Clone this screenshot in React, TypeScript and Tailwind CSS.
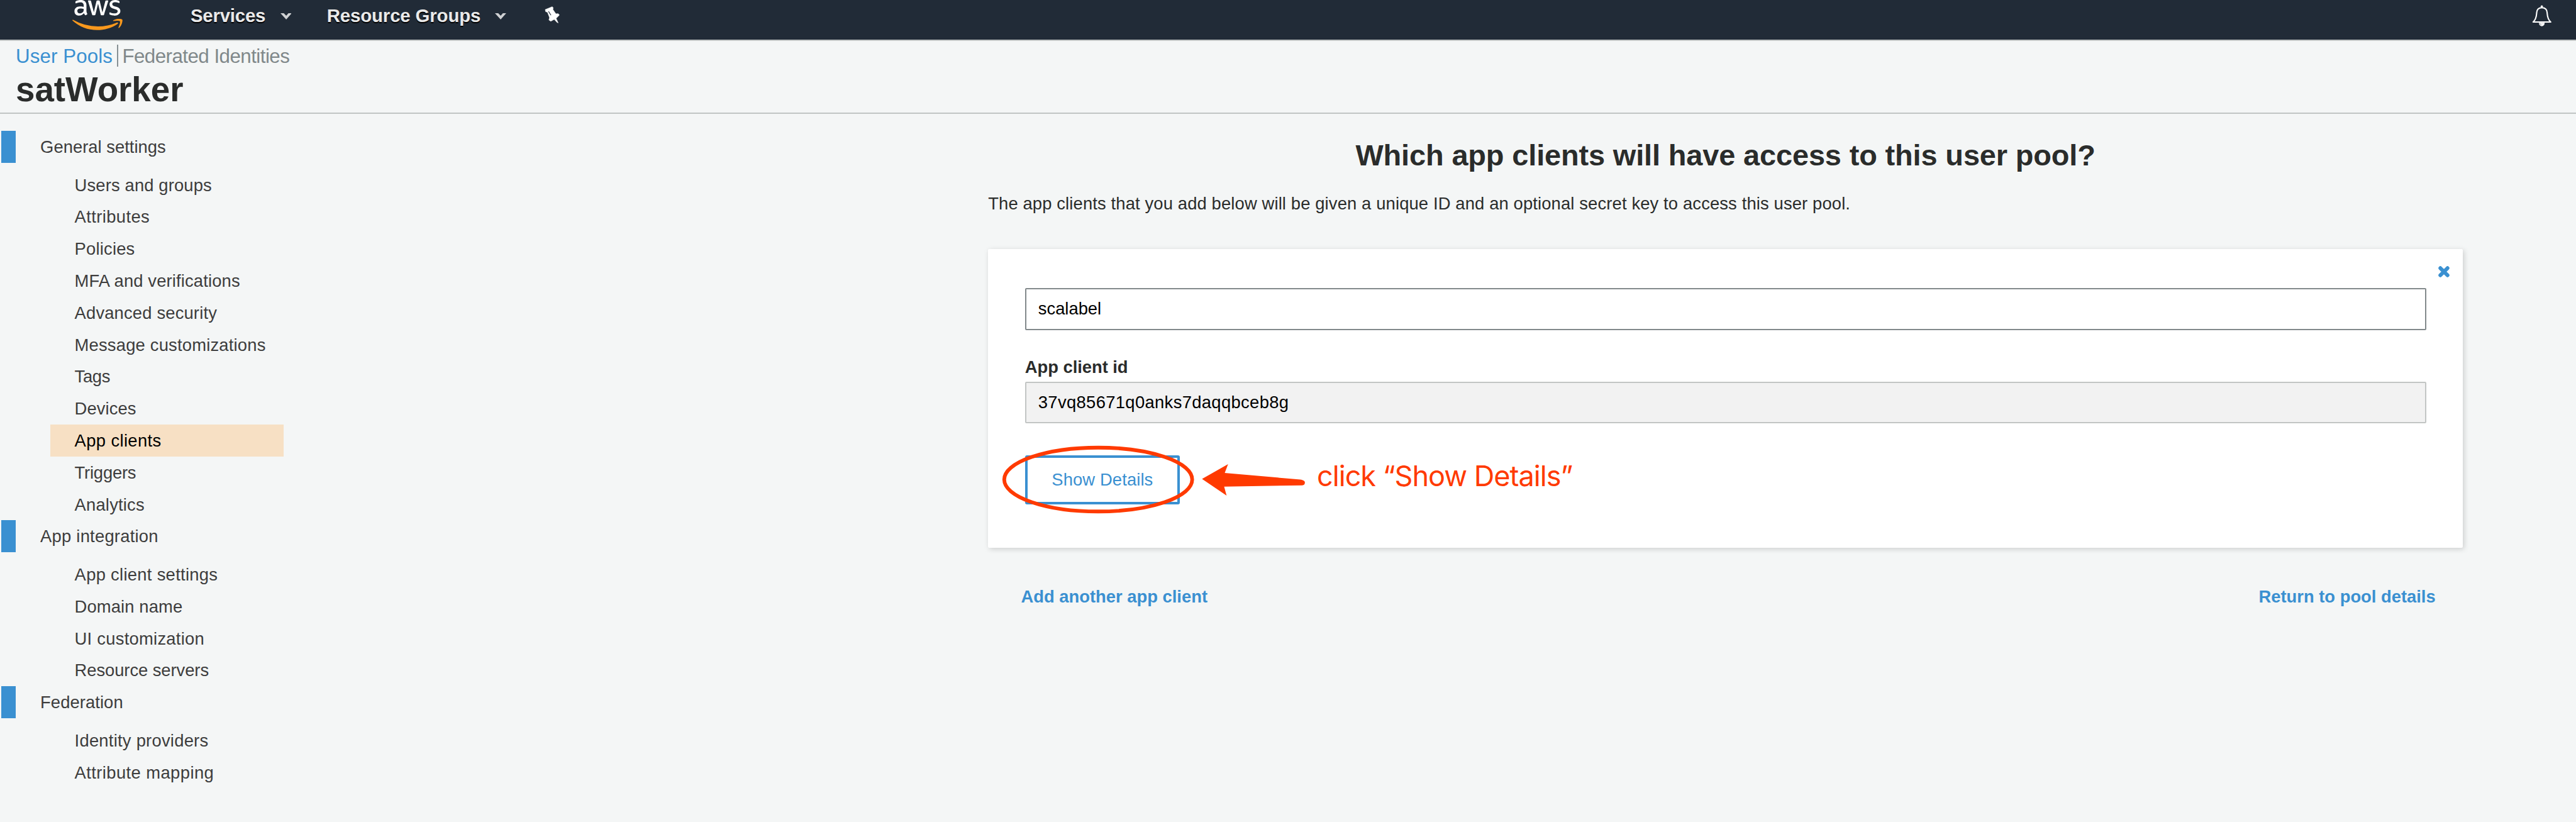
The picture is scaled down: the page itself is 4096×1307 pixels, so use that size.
import { FaAws } from 'react-icons/fa';

type Item = { label: string; tracking: string; active?: boolean };
type Section = { title: string; tracking: string; items: Item[] };

const sections: Section[] = [
  {
    title: 'General settings',
    tracking: 'tracking-[0.03px]',
    items: [
      { label: 'Users and groups', tracking: 'tracking-[0.15px]' },
      { label: 'Attributes', tracking: 'tracking-[0.4px]' },
      { label: 'Policies', tracking: 'tracking-[0.2px]' },
      { label: 'MFA and verifications', tracking: 'tracking-[0.15px]' },
      { label: 'Advanced security', tracking: 'tracking-[0.17px]' },
      { label: 'Message customizations', tracking: 'tracking-[0.2px]' },
      { label: 'Tags', tracking: 'tracking-[-0.3px]' },
      { label: 'Devices', tracking: 'tracking-[0.1px]' },
      { label: 'App clients', tracking: 'tracking-[0.38px]', active: true },
      { label: 'Triggers', tracking: 'tracking-[-0.2px]' },
      { label: 'Analytics', tracking: 'tracking-[0.2px]' },
    ],
  },
  {
    title: 'App integration',
    tracking: 'tracking-[0.24px]',
    items: [
      { label: 'App client settings', tracking: 'tracking-[0.3px]' },
      { label: 'Domain name', tracking: 'tracking-[0.13px]' },
      { label: 'UI customization', tracking: 'tracking-[0.26px]' },
      { label: 'Resource servers', tracking: 'tracking-[-0.06px]' },
    ],
  },
  {
    title: 'Federation',
    tracking: 'tracking-[0.08px]',
    items: [
      { label: 'Identity providers', tracking: 'tracking-[0.25px]' },
      { label: 'Attribute mapping', tracking: 'tracking-[0.42px]' },
    ],
  },
];

function Caret({ className }: { className: string }) {
  return (
    <svg viewBox="0 0 55 31" className={`h-[10.1px] w-[17.9px] ${className}`} fill="#cfd1d3">
      <path d="M0 0h16l12 12L39 0h16L28 31z" />
    </svg>
  );
}

function TopNav() {
  return (
    <nav className="flex h-[65px] items-start overflow-hidden border-b-2 border-[#c1c5c4] bg-[#212b37]">
      {/* Two-tone fill: white lettering above, orange smile below */}
      <svg width="0" height="0" className="absolute">
        <defs>
          <linearGradient id="aws-fill" gradientUnits="userSpaceOnUse" x1="0" y1="0" x2="0" y2="512">
            <stop offset="0.55" stopColor="#ffffff" />
            <stop offset="0.55" stopColor="#f8981d" />
          </linearGradient>
        </defs>
      </svg>
      <FaAws className="mt-[-8.5px] ml-[115.3px] h-[63.8px] w-[79.7px] shrink-0" fill="url(#aws-fill)" />
      <div className="ml-[107.9px] flex h-[49px] items-center text-[29.3px] leading-[49px] font-bold text-[#eaeaea] [text-shadow:0_2px_0_#000]">
        <span className="w-[119.3px] tracking-[-0.15px] whitespace-nowrap">Services</span>
        <Caret className="mt-[4px] ml-[23.4px]" />
        <span className="ml-[56.3px] w-[244.5px] tracking-[-0.09px] whitespace-nowrap">Resource Groups</span>
        <Caret className="mt-[4px] ml-[23.2px]" />
      </div>
      <svg viewBox="1100 31 74 82" className="mt-[10.3px] ml-[61px] h-[26.7px] w-[24.1px]">
        <path
          d="M1103 47 1137 33 1142 38 1140 46 1155 68 1166 67 1172 74 1156 90 1166 112 1161 110 1147 95 1130 104 1121 98 1124 86 1114 60 1105 57z"
          fill="#fff"
          stroke="#fff"
          strokeWidth="2"
          strokeLinejoin="round"
        />
        <path d="M1119 56l12 19" stroke="#212b37" strokeWidth="3.5" />
      </svg>
      <svg viewBox="386 23 97 105" className="mt-[7.5px] mr-[38.2px] ml-auto h-[34.2px] w-[31.6px]">
        <circle cx="434" cy="30" r="5.5" fill="#fff" />
        <path
          d="M391.5 106C408 92 408 74 409 60C410 44 420 36 434.5 36C449 36 459 44 460 60C461 74 461 92 477.5 106Z"
          fill="none"
          stroke="#fff"
          strokeWidth="6.5"
          strokeLinejoin="round"
        />
        <path d="M420 110h28c0 22-28 22-28 0z" fill="#fff" />
        <path d="M424 114l8 7" stroke="#212b37" strokeWidth="1.8" />
      </svg>
    </nav>
  );
}

function PoolHeader() {
  return (
    <header className="h-[116px] border-b-2 border-[#c1c5c4] pt-[6.3px] pl-[25px]">
      <div className="flex h-[35.2px] text-[31.27px] leading-[37px] whitespace-nowrap">
        <a className="w-[161px] tracking-[0.12px] text-[#3a90d1]">User Pools</a>
        <span className="h-[35.2px] w-[2px] bg-[#879094]" />
        <a className="pl-[6.4px] tracking-[-0.52px] text-[#80888a]">Federated Identities</a>
      </div>
      <h1 className="text-[54.7px] leading-[73.4px] font-bold text-[#2a2c2b]">satWorker</h1>
    </header>
  );
}

function Sidebar() {
  return (
    <aside className="w-[1571.2px] shrink-0 pt-[27.1px] text-[27.36px] leading-[51.4px] whitespace-nowrap text-[#3d3d3d]">
      {sections.map((s) => (
        <section key={s.title}>
          <div className="flex h-[50.81px] pl-[2px]">
            <span className="h-full w-[23.4px] bg-[#3a90d1]" />
            <span className={`pl-[38.7px] ${s.tracking}`}>{s.title}</span>
          </div>
          <ul className="pt-[9.77px]">
            {s.items.map((i) => (
              <li
                key={i.label}
                className={`ml-[80.2px] h-[50.81px] w-[371.3px] pl-[38.4px] ${i.tracking} ${
                  i.active ? 'bg-[#f7e0c4] text-black' : ''
                }`}
              >
                {i.label}
              </li>
            ))}
          </ul>
        </section>
      ))}
    </aside>
  );
}

function Annotation() {
  return (
    <>
      <svg viewBox="1620 715 530 125" className="absolute top-[302.9px] left-[11.7px] h-[122.1px] w-[517.9px]">
        <ellipse cx="1787" cy="780" rx="153" ry="52" fill="none" stroke="#ff3a00" strokeWidth="6" />
        <path
          d="M1956 779L1998.4 755L1993 769.3L2116 780Q2123.5 781 2123.5 785Q2123.5 789.3 2119 789.4L1992 791.6L1996 806Z"
          fill="#ff3a00"
        />
      </svg>
      <p className="absolute top-[331.7px] left-[522.9px] font-[Inter] text-[45px] leading-[60px] tracking-[-0.98px] whitespace-nowrap text-[#ff3a00]">
        click “Show Details”
      </p>
    </>
  );
}

function ClientCard() {
  return (
    <div className="relative mt-[56px] h-[474.9px] rounded-[2px] bg-white pt-[62.6px] pl-[58.6px] text-[27.36px] shadow-[2px_2px_8px_rgba(0,0,0,0.17)]">
      <svg viewBox="0 0 18 18" className="absolute top-[27.2px] right-[21.2px] size-[18px]">
        <path d="M3.3 3.3l11.4 11.4M14.7 3.3L3.3 14.7" stroke="#3a90d1" strokeWidth="6" strokeLinecap="round" />
      </svg>
      <div className="flex h-[66.4px] w-[2227.8px] items-center rounded-[2px] border-2 border-[#82898b] pl-[19px] leading-[62.4px] text-black">
        scalabel
      </div>
      <label className="mt-[45px] mb-[9.3px] block leading-[27.8px] font-bold tracking-[-0.03px] text-[#2a2c2b]">
        App client id
      </label>
      <div className="flex h-[66.4px] w-[2227.8px] items-center rounded-[2px] border-2 border-[#c2c5c4] bg-[#f2f2f2] pl-[19px] leading-[62.4px] tracking-[0.35px] text-black">
        37vq85671q0anks7daqqbceb8g
      </div>
      <button className="mt-[50.8px] block h-[78.2px] w-[246.2px] rounded-[3px] border-4 border-[#3a90d1] leading-[70.2px] tracking-[0.115px] text-[#3a90d1]">
        Show Details
      </button>
      <Annotation />
    </div>
  );
}

export default function App() {
  return (
    <div className="h-[1307px] w-[4096px] overflow-hidden bg-[#f4f6f6] font-['Liberation_Sans',sans-serif]">
      <TopNav />
      <PoolHeader />
      <div className="flex">
        <Sidebar />
        <main className="w-[2344.9px] shrink-0 pt-[35.8px]">
          <h2 className="text-center text-[46.9px] leading-[60px] font-bold tracking-[-0.126px] text-[#2a2c2b]">
            Which app clients will have access to this user pool?
          </h2>
          <p className="mt-[30.9px] text-[27.36px] leading-[32px] tracking-[0.14px] text-[#2a2c2b]">
            The app clients that you add below will be given a unique ID and an optional secret key to access this user pool.
          </p>
          <ClientCard />
          <div className="mt-[62.4px] flex justify-between pr-[43.4px] pl-[52.4px] text-[27.36px] leading-[32px] font-bold text-[#3a90d1]">
            <a>Add another app client</a>
            <a>Return to pool details</a>
          </div>
        </main>
      </div>
    </div>
  );
}
